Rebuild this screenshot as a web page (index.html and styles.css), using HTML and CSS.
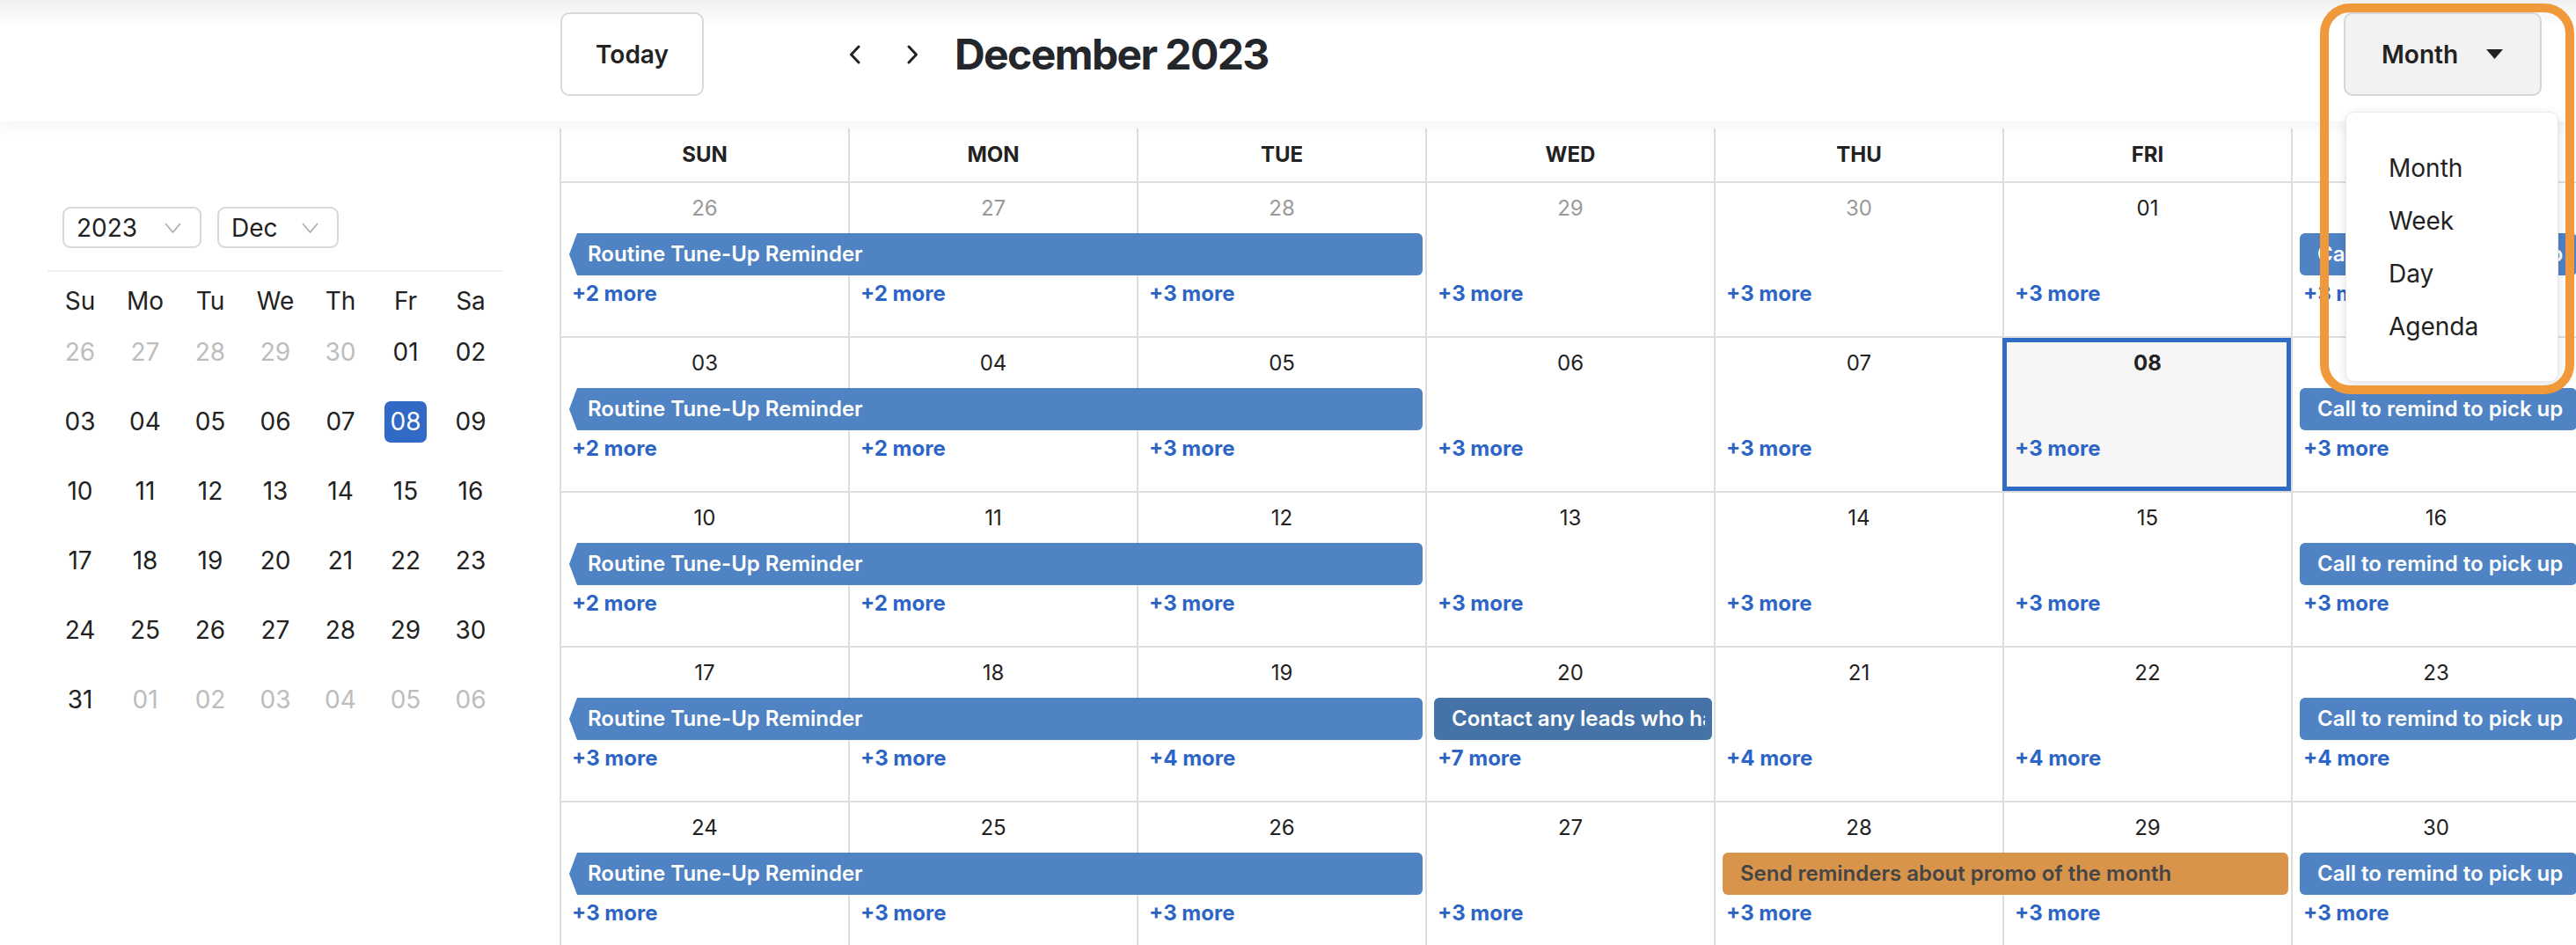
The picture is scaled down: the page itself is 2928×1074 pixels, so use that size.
FILE: index.html
```html
<!DOCTYPE html>
<html lang="en">
<head>
<meta charset="utf-8">
<title>Calendar</title>
<link rel="stylesheet" href="styles.css">
</head>
<body>
<header class="topbar">
  <button class="btn-today">Today</button>
  <div class="nav">
    <button class="nav-btn" aria-label="Previous"><svg width="15" height="22" viewBox="0 0 15 22"><path d="M12 2 L3.5 11 L12 20" fill="none" stroke="#222" stroke-width="3" stroke-linecap="round" stroke-linejoin="round"/></svg></button>
    <button class="nav-btn" aria-label="Next"><svg width="15" height="22" viewBox="0 0 15 22"><path d="M3 2 L11.5 11 L3 20" fill="none" stroke="#222" stroke-width="3" stroke-linecap="round" stroke-linejoin="round"/></svg></button>
  </div>
  <h1 class="title">December 2023</h1>
  <div class="view-switch">
    <button class="btn-view">Month <svg width="19" height="11" viewBox="0 0 19 11"><polygon points="0,0 19,0 9.5,11" fill="#222"/></svg></button>
    <div class="menu">
      <div class="menu-item">Month</div>
      <div class="menu-item">Week</div>
      <div class="menu-item">Day</div>
      <div class="menu-item">Agenda</div>
    </div>
  </div>
</header>

<div class="layout">
  <aside class="sidebar">
    <div class="selects">
      <div class="select select-year"><span>2023</span><svg width="19" height="12" viewBox="0 0 19 12"><path d="M1 1 L9.5 11 L18 1" fill="none" stroke="#ababab" stroke-width="1.6"/></svg></div>
      <div class="select select-month"><span>Dec</span><svg width="19" height="12" viewBox="0 0 19 12"><path d="M1 1 L9.5 11 L18 1" fill="none" stroke="#ababab" stroke-width="1.6"/></svg></div>
    </div>
    <div class="mini">
      <div class="mini-head"><span>Su</span><span>Mo</span><span>Tu</span><span>We</span><span>Th</span><span>Fr</span><span>Sa</span></div>
      <div class="mini-days">
        <span class="mini-day muted">26</span><span class="mini-day muted">27</span><span class="mini-day muted">28</span><span class="mini-day muted">29</span><span class="mini-day muted">30</span><span class="mini-day">01</span><span class="mini-day">02</span>
        <span class="mini-day">03</span><span class="mini-day">04</span><span class="mini-day">05</span><span class="mini-day">06</span><span class="mini-day">07</span><span class="mini-day sel"><b>08</b></span><span class="mini-day">09</span>
        <span class="mini-day">10</span><span class="mini-day">11</span><span class="mini-day">12</span><span class="mini-day">13</span><span class="mini-day">14</span><span class="mini-day">15</span><span class="mini-day">16</span>
        <span class="mini-day">17</span><span class="mini-day">18</span><span class="mini-day">19</span><span class="mini-day">20</span><span class="mini-day">21</span><span class="mini-day">22</span><span class="mini-day">23</span>
        <span class="mini-day">24</span><span class="mini-day">25</span><span class="mini-day">26</span><span class="mini-day">27</span><span class="mini-day">28</span><span class="mini-day">29</span><span class="mini-day">30</span>
        <span class="mini-day">31</span><span class="mini-day muted">01</span><span class="mini-day muted">02</span><span class="mini-day muted">03</span><span class="mini-day muted">04</span><span class="mini-day muted">05</span><span class="mini-day muted">06</span>
      </div>
    </div>
  </aside>

  <main class="calendar">
    <div class="head-row">
      <div class="head-cell">SUN</div><div class="head-cell">MON</div><div class="head-cell">TUE</div><div class="head-cell">WED</div><div class="head-cell">THU</div><div class="head-cell">FRI</div><div class="head-cell">SAT</div>
    </div>

    <!-- week 1 -->
    <div class="week">
      <div class="bg c1"></div><div class="bg c2"></div><div class="bg c3"></div><div class="bg c4"></div><div class="bg c5"></div><div class="bg c6"></div><div class="bg c7"></div>
      <div class="date c1 off">26</div><div class="date c2 off">27</div><div class="date c3 off">28</div><div class="date c4 off">29</div><div class="date c5 off">30</div><div class="date c6">01</div><div class="date c7">02</div>
      <div class="ev prior s1-3">Routine Tune-Up Reminder</div>
      <div class="ev c7">Call to remind to pick up</div>
      <div class="more c1">+2 more</div><div class="more c2">+2 more</div><div class="more c3">+3 more</div><div class="more c4">+3 more</div><div class="more c5">+3 more</div><div class="more c6">+3 more</div><div class="more c7">+3 more</div>
    </div>

    <!-- week 2 -->
    <div class="week">
      <div class="bg c1"></div><div class="bg c2"></div><div class="bg c3"></div><div class="bg c4"></div><div class="bg c5"></div><div class="bg c6 today"></div><div class="bg c7"></div>
      <div class="date c1">03</div><div class="date c2">04</div><div class="date c3">05</div><div class="date c4">06</div><div class="date c5">07</div><div class="date c6 now">08</div><div class="date c7">09</div>
      <div class="ev prior s1-3">Routine Tune-Up Reminder</div>
      <div class="ev c7">Call to remind to pick up</div>
      <div class="more c1">+2 more</div><div class="more c2">+2 more</div><div class="more c3">+3 more</div><div class="more c4">+3 more</div><div class="more c5">+3 more</div><div class="more c6">+3 more</div><div class="more c7">+3 more</div>
    </div>

    <!-- week 3 -->
    <div class="week">
      <div class="bg c1"></div><div class="bg c2"></div><div class="bg c3"></div><div class="bg c4"></div><div class="bg c5"></div><div class="bg c6"></div><div class="bg c7"></div>
      <div class="date c1">10</div><div class="date c2">11</div><div class="date c3">12</div><div class="date c4">13</div><div class="date c5">14</div><div class="date c6">15</div><div class="date c7">16</div>
      <div class="ev prior s1-3">Routine Tune-Up Reminder</div>
      <div class="ev c7">Call to remind to pick up</div>
      <div class="more c1">+2 more</div><div class="more c2">+2 more</div><div class="more c3">+3 more</div><div class="more c4">+3 more</div><div class="more c5">+3 more</div><div class="more c6">+3 more</div><div class="more c7">+3 more</div>
    </div>

    <!-- week 4 -->
    <div class="week">
      <div class="bg c1"></div><div class="bg c2"></div><div class="bg c3"></div><div class="bg c4"></div><div class="bg c5"></div><div class="bg c6"></div><div class="bg c7"></div>
      <div class="date c1">17</div><div class="date c2">18</div><div class="date c3">19</div><div class="date c4">20</div><div class="date c5">21</div><div class="date c6">22</div><div class="date c7">23</div>
      <div class="ev prior s1-3">Routine Tune-Up Reminder</div>
      <div class="ev dark c4"><span class="ev-text">Contact any leads who haven't booked</span></div>
      <div class="ev c7">Call to remind to pick up</div>
      <div class="more c1">+3 more</div><div class="more c2">+3 more</div><div class="more c3">+4 more</div><div class="more c4">+7 more</div><div class="more c5">+4 more</div><div class="more c6">+4 more</div><div class="more c7">+4 more</div>
    </div>

    <!-- week 5 -->
    <div class="week">
      <div class="bg c1"></div><div class="bg c2"></div><div class="bg c3"></div><div class="bg c4"></div><div class="bg c5"></div><div class="bg c6"></div><div class="bg c7"></div>
      <div class="date c1">24</div><div class="date c2">25</div><div class="date c3">26</div><div class="date c4">27</div><div class="date c5">28</div><div class="date c6">29</div><div class="date c7">30</div>
      <div class="ev prior s1-3">Routine Tune-Up Reminder</div>
      <div class="ev promo s5-6">Send reminders about promo of the month</div>
      <div class="ev c7">Call to remind to pick up</div>
      <div class="more c1">+3 more</div><div class="more c2">+3 more</div><div class="more c3">+3 more</div><div class="more c4">+3 more</div><div class="more c5">+3 more</div><div class="more c6">+3 more</div><div class="more c7">+3 more</div>
    </div>
  </main>
</div>

<div class="annotation"></div>
</body>
</html>
```

FILE: styles.css
```css
* { box-sizing: border-box; }

html, body {
  margin: 0;
  padding: 0;
  width: 2928px;
  height: 1074px;
  overflow: hidden;
  background: #fff;
  font-family: Inter, "Noto Sans", "Liberation Sans", sans-serif;
  color: #222;
}

body { position: relative; }

button { font-family: inherit; cursor: pointer; }

/* ---------- top bar ---------- */
.topbar {
  position: relative;
  z-index: 3;
  height: 138px;
  display: flex;
  align-items: flex-start;
  padding: 14px 39px 0 637px;
  background: linear-gradient(#f0f0f1 0, #ffffff 30px);
  box-shadow: 0 6px 18px rgba(0, 0, 0, 0.05);
}

.btn-today {
  width: 163px;
  height: 95px;
  border: 2px solid #d9d9d9;
  border-radius: 10px;
  background: #fff;
  font-size: 28px;
  font-weight: 600;
  color: #222;
  padding: 0;
}

.nav {
  display: flex;
  align-items: center;
  height: 95px;
  margin-left: 149px;
  gap: 22px;
}

.nav-btn {
  width: 44px;
  height: 44px;
  border: 0;
  padding: 0;
  background: none;
  display: flex;
  align-items: center;
  justify-content: center;
}

.title {
  margin: 0 0 0 26px;
  height: 95px;
  line-height: 95px;
  font-size: 48px;
  font-weight: 700;
  letter-spacing: -1.6px;
  color: #23262b;
}

.view-switch {
  margin-left: auto;
  position: relative;
}

.btn-view {
  width: 225px;
  height: 95px;
  border: 2px solid #d6d6d6;
  border-radius: 10px;
  background: #f2f2f2;
  font-size: 28px;
  font-weight: 600;
  color: #222;
  display: flex;
  align-items: center;
  gap: 32px;
  padding: 0 0 0 41px;
}

.menu {
  position: absolute;
  top: 113px;
  left: 2px;
  width: 242px;
  padding: 33px 0 32px 48px;
  background: #fff;
  border: 1px solid #e9e9e9;
  border-radius: 10px;
  box-shadow: 0 3px 12px rgba(0, 0, 0, 0.12);
  z-index: 4;
}

.menu-item {
  height: 60px;
  line-height: 60px;
  font-size: 28px;
  color: #222;
}

/* ---------- layout ---------- */
.layout {
  display: flex;
  width: 2932px;
}

/* ---------- sidebar ---------- */
.sidebar {
  width: 636px;
  flex-shrink: 0;
  padding: 97px 0 0 54px;
}

.selects {
  display: flex;
  gap: 18px;
  padding-left: 17px;
}

.select {
  height: 47px;
  border: 2px solid #d8d8d8;
  border-radius: 9px;
  display: flex;
  align-items: center;
  justify-content: space-between;
  padding: 0 21px 0 14px;
  font-size: 28px;
  color: #222;
}

.select-year { width: 158px; }
.select-month { width: 138px; }

.mini {
  width: 518px;
  margin-top: 25px;
  border-top: 2px solid #efefef;
}

.mini-head {
  display: grid;
  grid-template-columns: repeat(7, 74px);
  margin-top: 15px;
  height: 36px;
  line-height: 36px;
  text-align: center;
  font-size: 28px;
  color: #222;
}

.mini-days {
  display: grid;
  grid-template-columns: repeat(7, 74px);
  grid-auto-rows: 48px;
  row-gap: 31px;
  margin-top: 16px;
}

.mini-day {
  display: flex;
  align-items: center;
  justify-content: center;
  font-size: 28px;
  color: #222;
}

.mini-day.muted { color: #bdbdbd; }

.mini-day.sel b {
  width: 48px;
  height: 47px;
  border-radius: 7px;
  background: #3169c6;
  color: #fff;
  font-weight: 400;
  display: flex;
  align-items: center;
  justify-content: center;
}

/* ---------- month grid ---------- */
.calendar {
  width: 2296px;
  flex-shrink: 0;
  padding-top: 8px;
}

.head-row {
  display: grid;
  grid-template-columns: repeat(7, 328px);
  height: 62px;
  border-bottom: 2px solid #dddddd;
}

.head-cell {
  border-left: 2px solid #dddddd;
  text-align: center;
  line-height: 60px;
  font-size: 24px;
  font-weight: 700;
  color: #222;
}

.week {
  display: grid;
  grid-template-columns: repeat(7, 328px);
  grid-template-rows: 57px 48px 42px 1fr;
  height: 176px;
  border-bottom: 2px solid #dddddd;
}

.bg {
  grid-row: 1 / -1;
  border-left: 2px solid #dddddd;
}

.bg.today {
  border: 5px solid #3169c6;
  background: #f6f6f6;
}

.c1 { grid-column: 1; }
.c2 { grid-column: 2; }
.c3 { grid-column: 3; }
.c4 { grid-column: 4; }
.c5 { grid-column: 5; }
.c6 { grid-column: 6; }
.c7 { grid-column: 7; }
.s1-3 { grid-column: 1 / 4; }
.s5-6 { grid-column: 5 / 7; }

.date {
  grid-row: 1;
  text-align: center;
  line-height: 57px;
  font-size: 24px;
  color: #222;
  padding-left: 2px;
}

.date.off { color: #9a9a9a; }
.date.now { font-weight: 700; }

.ev {
  grid-row: 2;
  margin: 0 3px 0 10px;
  height: 48px;
  line-height: 48px;
  padding-left: 20px;
  border-radius: 6px;
  background: #4f83c3;
  color: #fff;
  font-size: 24px;
  font-weight: 600;
  white-space: nowrap;
  overflow: hidden;
}

.ev.prior {
  margin-left: 11px;
  padding-left: 21px;
  border-radius: 0 6px 6px 0;
  clip-path: polygon(9px 0, 100% 0, 100% 100%, 9px 100%, 0 50%);
}

.ev.dark {
  background: #4573a7;
  margin-right: 2px;
  padding-right: 8px;
}

.ev-text {
  display: block;
  overflow: hidden;
}

.ev.promo {
  background: #d9944b;
  color: #454545;
}

.more {
  grid-row: 3;
  line-height: 42px;
  padding-left: 14px;
  font-size: 24px;
  font-weight: 700;
  color: #2d65c7;
}

/* ---------- annotation overlay ---------- */
.annotation {
  position: absolute;
  left: 2637px;
  top: 4px;
  width: 289px;
  height: 444px;
  border: 10px solid #f0993b;
  border-radius: 34px;
  z-index: 5;
  pointer-events: none;
}
```
